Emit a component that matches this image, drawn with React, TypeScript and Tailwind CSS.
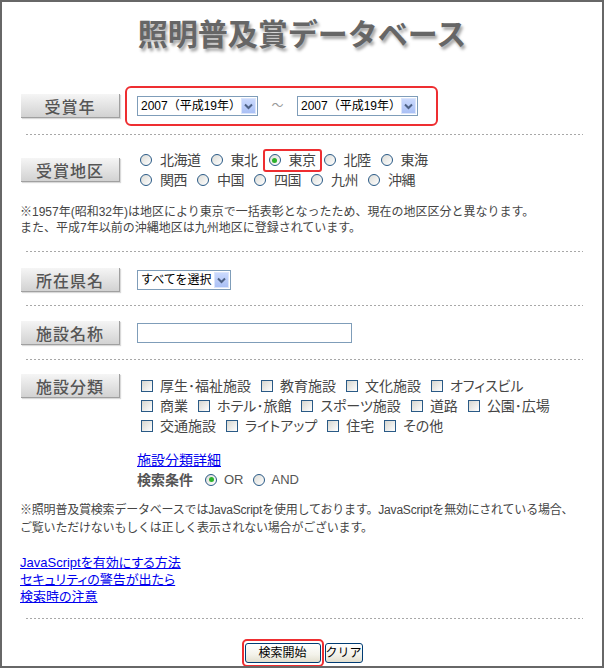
import React from "react";

// -----------------------------------------------------------------------
// small XP-ish form parts
// -----------------------------------------------------------------------

function Label({ children }: { children: React.ReactNode }) {
  return (
    <div className="w-[99px] h-[24px] shrink-0 flex items-center justify-center bg-[linear-gradient(#f5f5f5,#d2d2d2)] border-r border-b border-[#a0a0a0] shadow-[1px_1px_1px_rgba(0,0,0,0.15)] text-[16px] font-medium text-[#555] tracking-[1px] [font-family:'Noto_Sans_CJK_JP',sans-serif]">
      {children}
    </div>
  );
}

function Divider() {
  return (
    <div className="ml-[24px] mr-[19px] h-px bg-[linear-gradient(to_right,#a8a8a8_50%,transparent_50%)] bg-[length:4px_1px]" />
  );
}

function Radio({ checked = false }: { checked?: boolean }) {
  return (
    <span className="w-[12px] h-[12px] shrink-0 rounded-full border border-[#2a5a86] bg-[linear-gradient(135deg,#dcdcd7,#ffffff)] flex items-center justify-center">
      {checked && <span className="w-[5px] h-[5px] rounded-full bg-[#2bb12b]" />}
    </span>
  );
}

function Check() {
  return (
    <span className="w-[12px] h-[12px] shrink-0 border border-[#2a5a86] bg-[linear-gradient(135deg,#d6d6d0,#ffffff)]" />
  );
}

function FakeSelect({ text, width }: { text: string; width: string }) {
  return (
    <div className={`h-[20px] border border-[#7f9db9] bg-white flex items-center justify-between ${width}`}>
      <span className="pl-[3px] text-[12px] text-black whitespace-nowrap leading-none">{text}</span>
      <span className="w-[15px] h-[16px] mr-px border border-[#dbe5fb] bg-[linear-gradient(#cad9fd,#aac0f5)] flex items-center justify-center">
        <svg width="9" height="7" viewBox="0 0 9 7">
          <path d="M1 1.5 L4.5 5 L8 1.5" fill="none" stroke="#4d6185" strokeWidth="2" />
        </svg>
      </span>
    </div>
  );
}

function RadioItem({ text, checked }: { text: string; checked?: boolean }) {
  return (
    <span className="flex items-center gap-[8px]">
      <Radio checked={checked} />
      <span>{text}</span>
    </span>
  );
}

function CheckItem({ text }: { text: string }) {
  return (
    <span className="flex items-center gap-[7px]">
      <Check />
      <span>{text}</span>
    </span>
  );
}

const xpButton =
  "h-[20px] rounded-[3px] border border-[#003c74] bg-[linear-gradient(#ffffff,#f3f2ea_60%,#e2dfcf)] text-[12px] text-black whitespace-nowrap flex items-center justify-center";

export default function App() {
  return (
    <div className="w-[604px] h-[668px] box-border border-2 border-[#676767] bg-white overflow-hidden [font-family:'Liberation_Sans','Noto_Sans_CJK_JP',sans-serif] text-[#454545]">
      {/* title */}
      <div className="h-[84px] pt-[15px] flex justify-center">
        <h1 className="text-[30px] leading-[30px] font-bold text-[#666] [text-shadow:2px_3px_3px_rgba(0,0,0,0.35)] [font-family:'Noto_Sans_CJK_JP',sans-serif]">
          照明普及賞データベース
        </h1>
      </div>

      {/* 受賞年 */}
      <div className="h-[40px] pl-[19px] flex items-center">
        <Label>受賞年</Label>
        <div className="ml-[5px] h-[40px] rounded-[6px] border-2 border-[#ee2e31] pl-[10px] pr-[18px] flex items-center">
          <FakeSelect text="2007（平成19年）" width="w-[121px]" />
          <span className="w-[39px] text-center text-[12px] text-[#999]">～</span>
          <FakeSelect text="2007（平成19年）" width="w-[121px]" />
        </div>
      </div>

      <div className="mt-[8px]">
        <Divider />
      </div>

      {/* 受賞地区 */}
      <div className="mt-[15px] pl-[19px] flex items-center">
        <Label>受賞地区</Label>
        <div className="ml-[20px] flex flex-col text-[14px] tracking-[-0.5px]">
          <div className="h-[20px] flex items-center gap-[10px]">
            <RadioItem text="北海道" />
            <RadioItem text="東北" />
            <span className="-ml-[5px] -mr-[8px] h-[23px] rounded-[3px] border-2 border-[#ee2e31] pl-[4px] pr-[4px] flex items-center">
              <RadioItem text="東京" checked />
            </span>
            <RadioItem text="北陸" />
            <RadioItem text="東海" />
          </div>
          <div className="h-[20px] flex items-center gap-[10px]">
            <RadioItem text="関西" />
            <RadioItem text="中国" />
            <RadioItem text="四国" />
            <RadioItem text="九州" />
            <RadioItem text="沖縄" />
          </div>
        </div>
      </div>

      <p className="mt-[14px] pl-[18px] text-[12px] leading-[16px] whitespace-nowrap">
        ※1957年(昭和32年)は地区により東京で一括表彰となったため、現在の地区区分と異なります。
        <br />
        また、平成7年以前の沖縄地区は九州地区に登録されています。
      </p>

      <div className="mt-[15px]">
        <Divider />
      </div>

      {/* 所在県名 */}
      <div className="mt-[16px] h-[24px] pl-[19px] flex items-center">
        <Label>所在県名</Label>
        <div className="ml-[17px]">
          <FakeSelect text="すべてを選択" width="w-[94px]" />
        </div>
      </div>

      <div className="mt-[13px]">
        <Divider />
      </div>

      {/* 施設名称 */}
      <div className="mt-[15px] h-[24px] pl-[19px] flex items-center">
        <Label>施設名称</Label>
        <input
          type="text"
          className="ml-[17px] w-[215px] h-[20px] border border-[#7f9db9] bg-white outline-none"
        />
      </div>

      <div className="mt-[14px]">
        <Divider />
      </div>

      {/* 施設分類 */}
      <div className="mt-[14px] pl-[19px] flex items-start">
        <Label>施設分類</Label>
        <div className="ml-[17px] flex flex-col">
          <div className="mt-[2px] pl-[4px] text-[14px] [font-feature-settings:'palt'] flex flex-col">
            <div className="h-[20px] flex items-center gap-[10px]">
              <CheckItem text="厚生･福祉施設" />
              <CheckItem text="教育施設" />
              <CheckItem text="文化施設" />
              <CheckItem text="オフィスビル" />
            </div>
            <div className="h-[20px] flex items-center gap-[10px]">
              <CheckItem text="商業" />
              <CheckItem text="ホテル･旅館" />
              <CheckItem text="スポーツ施設" />
              <CheckItem text="道路" />
              <CheckItem text="公園･広場" />
            </div>
            <div className="h-[20px] flex items-center gap-[10px]">
              <CheckItem text="交通施設" />
              <CheckItem text="ライトアップ" />
              <CheckItem text="住宅" />
              <CheckItem text="その他" />
            </div>
          </div>
          <div className="mt-[14px] h-[20px] leading-[20px]">
            <a href="#" className="text-[14px] text-[#0000ee] underline">
              施設分類詳細
            </a>
          </div>
          <div className="h-[19px] flex items-center">
            <span className="text-[14px] font-bold text-[#555] [font-family:'Noto_Sans_CJK_JP',sans-serif]">検索条件</span>
            <span className="ml-[12px] flex items-center gap-[7px] text-[13px] text-[#555]">
              <Radio checked />
              <span>OR</span>
            </span>
            <span className="ml-[9px] flex items-center gap-[7px] text-[13px] text-[#555]">
              <Radio />
              <span>AND</span>
            </span>
          </div>
        </div>
      </div>

      <p className="mt-[12px] pl-[18px] text-[12px] leading-[18px] whitespace-nowrap tracking-[-0.2px]">
        ※照明普及賞検索データベースではJavaScriptを使用しております。JavaScriptを無効にされている場合、
        <br />
        ご覧いただけないもしくは正しく表示されない場合がございます。
      </p>

      <div className="mt-[17px] pl-[18px] flex flex-col items-start text-[13px] leading-[17px] [font-feature-settings:'palt']">
        <a href="#" className="text-[#0000ee] underline">JavaScriptを有効にする方法</a>
        <a href="#" className="text-[#0000ee] underline">セキュリティの警告が出たら</a>
        <a href="#" className="text-[#0000ee] underline">検索時の注意</a>
      </div>

      <div className="mt-[13px]">
        <Divider />
      </div>

      {/* buttons */}
      <div className="mt-[20px] flex justify-center items-start">
        <div className="rounded-[5px] border-2 border-[#ee2e31] px-px py-[2px]">
          <button className={`w-[76px] ${xpButton}`}>検索開始</button>
        </div>
        <button className={`mt-[4px] ml-[1px] w-[38px] ${xpButton}`}>クリア</button>
      </div>
    </div>
  );
}
